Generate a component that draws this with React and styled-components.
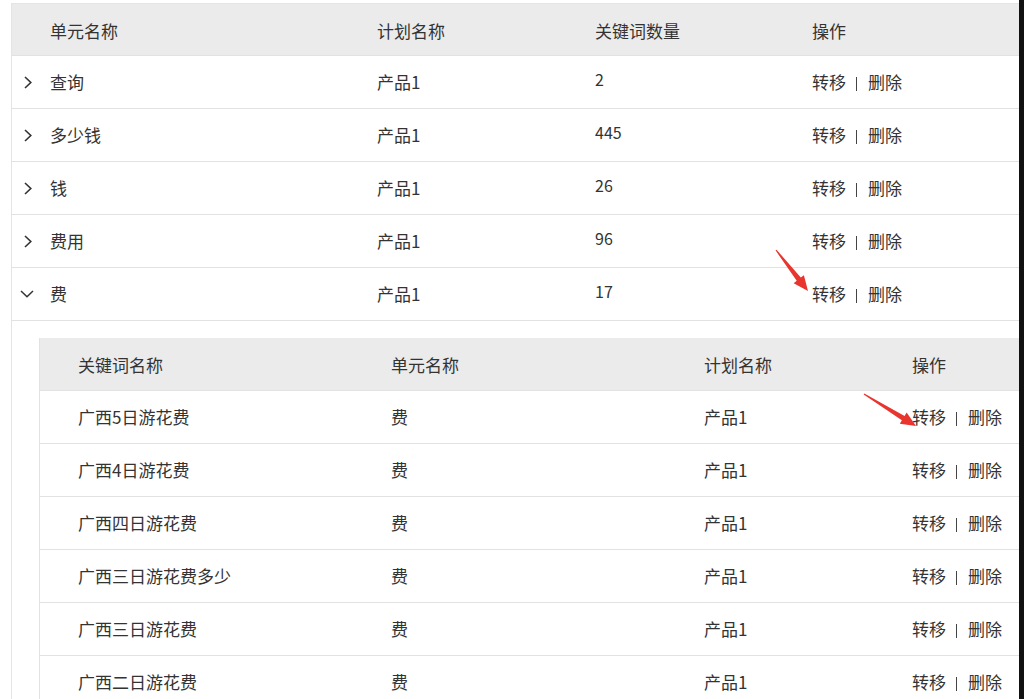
import React from 'react';
import styled, { createGlobalStyle } from 'styled-components';

const GlobalStyle = createGlobalStyle`
  html, body {
    margin: 0;
    padding: 0;
    background: #fff;
  }
  body {
    font-family: "Noto Sans CJK SC", "Noto Sans", sans-serif;
    color: #333;
    overflow: hidden;
  }
`;

const Page = styled.div`
  position: relative;
  display: flex;
  height: 699px;
  overflow: hidden;
`;

const Main = styled.div`
  flex: 1;
  padding: 3px 0 0 11px;
`;

const EdgeBar = styled.div`
  width: 5px;
  background: #111;
`;

const Table = styled.div`
  border-top: 1px solid #e4e4e4;
  border-left: 1px solid #e4e4e4;
  font-size: 17px;
  line-height: 1;
`;

const Row = styled.div`
  display: grid;
  grid-template-columns: ${(p) => p.$cols};
  align-items: center;
  height: ${(p) => p.$h || 52}px;
  background: ${(p) => (p.$head ? '#ebebeb' : '#fff')};
  border-bottom: 1px solid #e2e2e2;
`;

const Toggle = styled.div`
  display: flex;
  justify-content: center;
  align-items: center;
  padding-right: ${(p) => (p.$open ? '8px' : '6px')};
`;

const Cell = styled.div`
  white-space: nowrap;
  margin-top: -2px;
`;

const HeadCell = styled.div`
  white-space: nowrap;
  margin-top: 1px;
`;

const Num = styled(Cell)`
  margin-top: -6px;
  font-size: 16px;
`;

const Ops = styled.div`
  display: flex;
  align-items: center;
  white-space: nowrap;
  margin-top: -2px;
`;

const Pipe = styled.span`
  display: inline-block;
  width: 1px;
  height: 14px;
  margin: 5px 11px 0 10px;
  background: #444;
`;

const Expanded = styled.div`
  padding: 17px 0 0 27px;
`;

const SubTable = styled.div`
  border-left: 1px solid #e2e2e2;
  font-size: 17px;
`;

const Overlay = styled.svg`
  position: absolute;
  left: 0;
  top: 0;
  pointer-events: none;
`;

const outerCols = '38px 327px 218px 217px 1fr';
const innerCols = '38px 313px 313px 208px 1fr';

const units = [
  { name: '查询', plan: '产品1', count: '2' },
  { name: '多少钱', plan: '产品1', count: '445' },
  { name: '钱', plan: '产品1', count: '26' },
  { name: '费用', plan: '产品1', count: '96' },
  { name: '费', plan: '产品1', count: '17', open: true },
];

const keywords = [
  '广西5日游花费',
  '广西4日游花费',
  '广西四日游花费',
  '广西三日游花费多少',
  '广西三日游花费',
  '广西二日游花费',
];

const Chevron = ({ open }) =>
  open ? (
    <svg width="14" height="8" viewBox="0 0 14 8">
      <polyline points="1,1 7,6.8 13,1" fill="none" stroke="#333" strokeWidth="1.5" />
    </svg>
  ) : (
    <svg width="8" height="13" viewBox="0 0 8 13">
      <polyline points="1,1 6.8,6.5 1,12" fill="none" stroke="#333" strokeWidth="1.6" />
    </svg>
  );

const Actions = () => (
  <Ops>
    转移<Pipe />删除
  </Ops>
);

// red annotation arrow, drawn from tail (x1,y1) to tip (x2,y2)
const Arrow = ({ x1, y1, x2, y2 }) => {
  const len = Math.hypot(x2 - x1, y2 - y1);
  const ang = (Math.atan2(y2 - y1, x2 - x1) * 180) / Math.PI;
  const h = 15;
  return (
    <g transform={`translate(${x1} ${y1}) rotate(${ang})`}>
      <polygon
        points={`0,-0.6 ${len - h},-2.6 ${len - h},-6.5 ${len},0 ${len - h},6.5 ${len - h},2.6 0,0.6`}
        fill="#e8352e"
      />
    </g>
  );
};

const App = () => (
  <Page>
    <GlobalStyle />
    <Main>
      <Table>
        <Row $head $h={51} $cols={outerCols}>
          <div />
          <HeadCell>单元名称</HeadCell>
          <HeadCell>计划名称</HeadCell>
          <HeadCell>关键词数量</HeadCell>
          <HeadCell>操作</HeadCell>
        </Row>
        {units.map((u) => (
          <Row key={u.name} $cols={outerCols}>
            <Toggle $open={u.open}>
              <Chevron open={u.open} />
            </Toggle>
            <Cell>{u.name}</Cell>
            <Cell>{u.plan}</Cell>
            <Num>{u.count}</Num>
            <Actions />
          </Row>
        ))}
        <Expanded>
          <SubTable>
            <Row $head $h={52} $cols={innerCols}>
              <div />
              <HeadCell>关键词名称</HeadCell>
              <HeadCell>单元名称</HeadCell>
              <HeadCell>计划名称</HeadCell>
              <HeadCell>操作</HeadCell>
            </Row>
            {keywords.map((k) => (
              <Row key={k} $cols={innerCols}>
                <div />
                <Cell>{k}</Cell>
                <Cell>费</Cell>
                <Cell>产品1</Cell>
                <Actions />
              </Row>
            ))}
          </SubTable>
        </Expanded>
      </Table>
    </Main>
    <EdgeBar />
    <Overlay width="1024" height="699">
      <Arrow x1={776} y1={250} x2={808} y2={291} />
      <Arrow x1={864} y1={394} x2={916} y2={426} />
    </Overlay>
  </Page>
);

export default App;
